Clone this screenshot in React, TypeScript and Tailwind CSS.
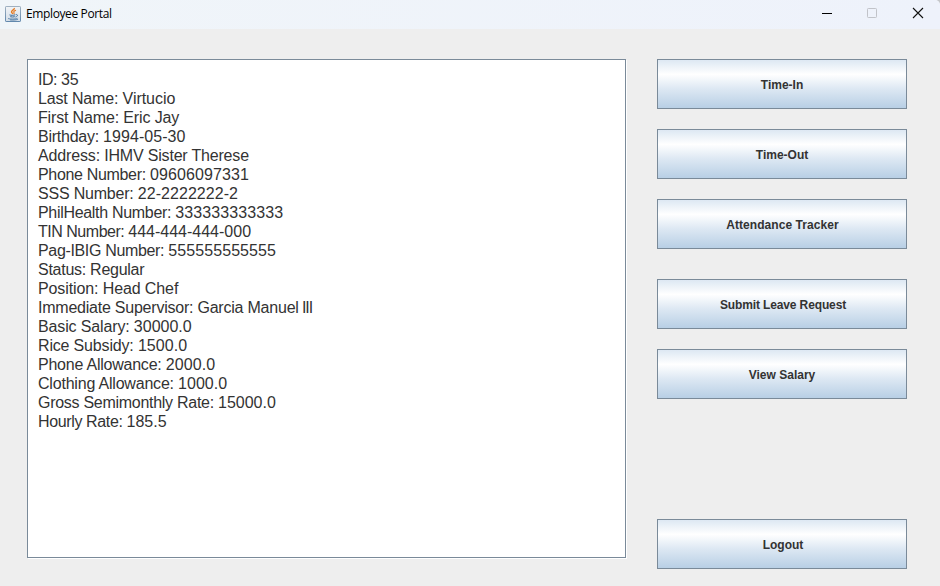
type Detail = { label: string; value: string; labelClass: string; valueClass: string; suffix?: string };

const details: Detail[] = [
  { label: "ID: ", value: "35", labelClass: "tracking-[-0.5px]", valueClass: "tracking-[0px]" },
  { label: "Last Name: ", value: "Virtucio", labelClass: "tracking-[-0.15px]", valueClass: "tracking-[-0.05px]" },
  { label: "First Name: ", value: "Eric Jay", labelClass: "tracking-[-0.16px]", valueClass: "tracking-[-0.11px]" },
  { label: "Birthday: ", value: "1994-05-30", labelClass: "tracking-[-0.25px]", valueClass: "tracking-[0.05px]" },
  { label: "Address: ", value: "IHMV Sister Therese", labelClass: "tracking-[-0.15px]", valueClass: "tracking-[-0.19px]" },
  { label: "Phone Number: ", value: "09606097331", labelClass: "tracking-[-0.33px]", valueClass: "tracking-[0.12px]" },
  { label: "SSS Number: ", value: "22-2222222-2", labelClass: "tracking-[-0.2px]", valueClass: "tracking-[0.04px]" },
  { label: "PhilHealth Number: ", value: "333333333333", labelClass: "tracking-[-0.31px]", valueClass: "tracking-[0.09px]" },
  { label: "TIN Number: ", value: "444-444-444-000", labelClass: "tracking-[-0.48px]", valueClass: "tracking-[0px]" },
  { label: "Pag-IBIG Number: ", value: "555555555555", labelClass: "tracking-[-0.34px]", valueClass: "tracking-[0.08px]" },
  { label: "Status: ", value: "Regular", labelClass: "tracking-[-0.27px]", valueClass: "tracking-[-0.27px]" },
  { label: "Position: ", value: "Head Chef", labelClass: "tracking-[-0.11px]", valueClass: "tracking-[-0.11px]" },
  { label: "Immediate Supervisor: ", value: "Garcia Manuel", labelClass: "tracking-[-0.23px]", valueClass: "tracking-[-0.22px]", suffix: " III" },
  { label: "Basic Salary: ", value: "30000.0", labelClass: "tracking-[-0.14px]", valueClass: "tracking-[0px]" },
  { label: "Rice Subsidy: ", value: "1500.0", labelClass: "tracking-[-0.17px]", valueClass: "tracking-[0.05px]" },
  { label: "Phone Allowance: ", value: "2000.0", labelClass: "tracking-[-0.23px]", valueClass: "tracking-[0.1px]" },
  { label: "Clothing Allowance: ", value: "1000.0", labelClass: "tracking-[-0.2px]", valueClass: "tracking-[0px]" },
  { label: "Gross Semimonthly Rate: ", value: "15000.0", labelClass: "tracking-[-0.28px]", valueClass: "tracking-[0px]" },
  { label: "Hourly Rate: ", value: "185.5", labelClass: "tracking-[-0.37px]", valueClass: "tracking-[0px]" },
];

function JavaIcon() {
  return (
    <svg width="16" height="16" viewBox="0 0 16 16" fill="none">
      <defs>
        <linearGradient id="tile" x1="0" y1="0" x2="0" y2="1">
          <stop offset="0" stopColor="#f1f4f7" />
          <stop offset="1" stopColor="#d3dde7" />
        </linearGradient>
        <linearGradient id="edge" x1="0" y1="0" x2="0" y2="1">
          <stop offset="0" stopColor="#9fb0c0" />
          <stop offset="1" stopColor="#6288ad" />
        </linearGradient>
      </defs>
      <rect x="0.5" y="0.5" width="15" height="15" rx="0.6" fill="url(#tile)" stroke="url(#edge)" />
      <path d="M9.300 2C10 3.700 6 4.500 6.500 6c.2.700 1 1.100 1.300 2" stroke="#e67a22" strokeWidth="1.400" />
      <path d="M11 4.300C9 5 8.200 5.800 9 6.700c.4.500.2.900-.3 1.400" stroke="#e67a22" strokeWidth="1.100" />
      <path d="M4.500 8.900c1.600.6 4 .5 5.500 0M5.200 10.700c1.400.4 3.200.4 4.600 0" stroke="#3c6c9b" strokeWidth="1" />
      <path d="M10.600 8.700c2.500-.7 2.700 1.500-.2 2.400" stroke="#3c6c9b" strokeWidth="0.900" />
      <path d="M3 12.300c.8 1 7.800 1 9.400 0M5 13.900c2.500.3 6.200.2 8-.7" stroke="#3c6c9b" strokeWidth="0.800" />
    </svg>
  );
}

function PortalButton({
  label,
  className = "",
  textClass = "",
}: {
  label: string;
  className?: string;
  textClass?: string;
}) {
  return (
    <button
      className={`flex h-[50px] w-[250px] shrink-0 items-center justify-center border border-[#7a8a99] bg-[linear-gradient(to_bottom,#dde8f3_0%,#ffffff_30%,#dde8f3_60%,#b8cfe5_100%)] pt-px text-[12px] font-bold leading-[14px] text-[#333333] ${className}`}
    >
      <span className={textClass}>{label}</span>
    </button>
  );
}

export default function App() {
  return (
    <div className="h-[586px] w-[940px] bg-[#c4c6ca]">
      <div className="flex h-full flex-col overflow-hidden rounded-tr-[5px] bg-[#eeeeee] font-['Liberation_Sans',Arial,sans-serif]">
        <header className="flex h-[29px] shrink-0 items-center bg-linear-to-r from-[#f0f5f9] to-[#eef2fb] pb-[2px] pl-[5px]">
          <JavaIcon />
          <h1 className="ml-[5px] flex-1 font-['Open_Sans','Noto_Sans',sans-serif] text-[12px] leading-4 tracking-[-0.38px] text-black">
            Employee Portal
          </h1>
          <svg width="118" height="27" viewBox="0 0 118 27" fill="none">
            <path d="M0 13.500h10" stroke="#000" />
            <rect x="45.500" y="8.500" width="9" height="9" rx="0.800" stroke="#c1c3c9" />
            <path d="M91 8l10 10M101 8l-10 10" stroke="#111" strokeWidth="1.100" />
          </svg>
        </header>
        <main className="flex pl-[27px] pt-[30px]">
          <section className="h-[499px] w-[599px] border border-[#7a8a99] bg-white pl-[10px] pt-[10px] text-[16px] leading-[19px] text-[#333333] shadow-[1px_1px_0_#ffffff]">
            {details.map(({ label, value, labelClass, valueClass, suffix }) => (
              <p key={label} className="whitespace-pre">
                <span className={labelClass}>{label}</span>
                <span className={valueClass}>{value}</span>
                {suffix && <span className="tracking-[-1.1px]">{suffix}</span>}
              </p>
            ))}
          </section>
          <nav className="ml-[31px] flex flex-col">
            <PortalButton label="Time-In" />
            <PortalButton label="Time-Out" className="mt-5" />
            <PortalButton label="Attendance Tracker" className="mt-5 pl-px" textClass="tracking-[0.07px]" />
            <PortalButton label="Submit Leave Request" className="mt-[30px] pl-[2px]" textClass="tracking-[-0.13px]" />
            <PortalButton label="View Salary" className="mt-5" />
            <PortalButton label="Logout" className="mt-[120px] pl-[2px]" textClass="tracking-[-0.05px]" />
          </nav>
        </main>
      </div>
    </div>
  );
}
